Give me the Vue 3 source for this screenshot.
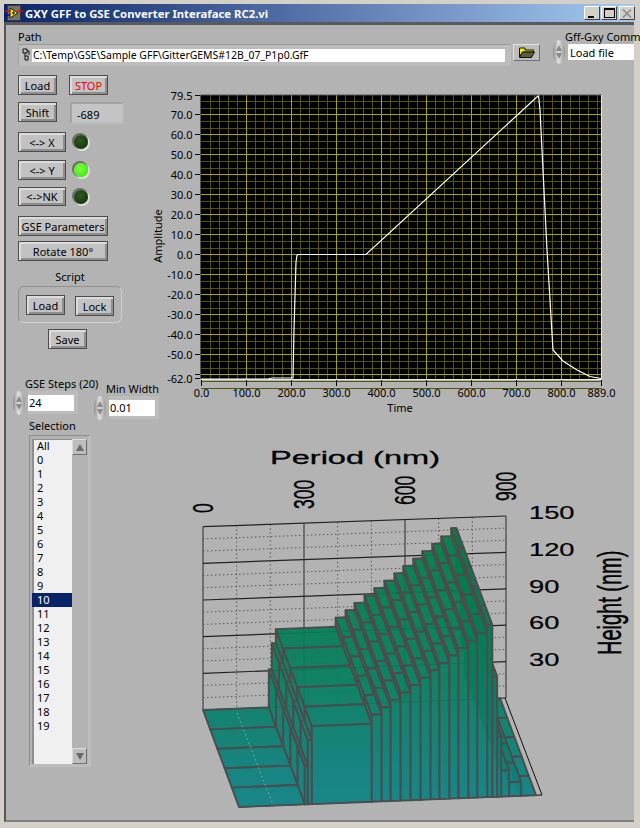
<script setup>
import { computed } from "vue"

// ---- waveform chart ----
const px = (t) => Math.round(51.2 + 0.4499 * t) + 0.5
const py = (v) => Math.round(169.2 - 2 * v) + 0.5

const yTicks = [79.5, 70, 60, 50, 40, 30, 20, 10, 0, -10, -20, -30, -40, -50, -62]
const xTicks = [0, 100, 200, 300, 400, 500, 600, 700, 800, 889]

const majorY = [70, 60, 50, 40, 30, 20, 10, 0, -10, -20, -30, -40, -50, -60]
const minorY = []
for (let n = -2; n < 42; n++) {
  if (n % 3 !== 0) minorY.push(70 - (n * 10) / 3)
}
const majorX = [100, 200, 300, 400, 500, 600, 700, 800]
const minorX = []
for (let t = 20; t < 889; t += 20) if (t % 100 !== 0) minorX.push(t)

const curve = [
  [201, 379], [268, 379], [272, 378], [293, 378], [294, 330], [296, 262], [297, 255.5], [298, 254.5], [366, 254.5], [538.5, 95.5],
  [540, 110], [547, 250], [553, 350], [563, 361], [577, 370], [590, 376.5], [601, 378.5],
]
const curvePoints = curve.map((p) => `${p[0] - 150},${p[1] - 85}`).join(" ")

// ---- 3D surface, projected by hand ----
const BL = [203, 710]
const BR = [505, 698]
const FL = [239, 807]
const project = (u, v, h) => [
  BL[0] + (BR[0] - BL[0]) * u + (FL[0] - BL[0]) * v - 190,
  BL[1] + (BR[1] - BL[1]) * u + (FL[1] - BL[1]) * v - h - 430,
]
const pts = (list) => list.map((p) => p.map((n) => n.toFixed(1)).join(",")).join(" ")

const frontX = [239, 305, 308, 312, 372, 382, 391, 401, 411, 421, 431, 440, 450, 459, 469, 478, 488, 493, 498, 502, 510, 522, 537]
const heights = [0, 38, 64, 78, 87, 94, 101, 108, 115, 122, 129, 136, 143, 150, 157, 164, 172, 120, 60, 26, 14, 0]
const us = frontX.map((x) => (x - 239) / 303)
const vs = [0, 0.2, 0.4, 0.6, 0.8, 1]

const faces = computed(() => {
  const out = []
  for (let j = 0; j < vs.length - 1; j++) {
    for (let k = heights.length - 1; k >= 0; k--) {
      const h = heights[k]
      const a = us[k]
      const b = us[k + 1]
      // riser on the left side of this step
      if (k > 0 && heights[k - 1] !== h) {
        out.push(pts([project(a, vs[j], heights[k - 1]), project(a, vs[j], h), project(a, vs[j + 1], h), project(a, vs[j + 1], heights[k - 1])]))
      }
      out.push(pts([project(a, vs[j], h), project(b, vs[j], h), project(b, vs[j + 1], h), project(a, vs[j + 1], h)]))
    }
  }
  // front skirt
  for (let k = heights.length - 1; k >= 0; k--) {
    if (heights[k] > 0) {
      out.push(pts([project(us[k], 1, heights[k]), project(us[k + 1], 1, heights[k]), project(us[k + 1], 1, 0), project(us[k], 1, 0)]))
    }
  }
  return out
})

const wallLeft = [526.7, 563.3, 600, 636.6, 673.3, 710]
const wallRight = [516, 552.4, 588.8, 625.2, 661.6, 698]
const wallX = (i) => 203 + (303 * i) / 9 - 190
const wallY = (level, i) => wallLeft[level] + ((wallRight[level] - wallLeft[level]) * i) / 9 - 430

const selection = ["All", ...Array.from({ length: 20 }, (_, i) => String(i))]
</script>

<template>
  <div class="window">
    <div class="titlebar">
      <svg class="vi-icon" width="18" height="16" viewBox="0 0 18 16">
        <rect x="2" y="0" width="14" height="16" fill="#3a3a3a" />
        <rect x="3" y="1" width="12" height="14" fill="#77756a" />
        <path d="M5 3 L13 8 L5 13 Z" fill="#f0e000" stroke="#222" />
        <path d="M0 6 H5 M13 6 H18" stroke="#f00000" stroke-width="1.4" />
        <path d="M0 10 H5" stroke="#0000e0" stroke-width="1.4" />
        <path d="M7 8 H10 M8.5 6.5 V9.5" stroke="#111" />
      </svg>
      <span class="title">GXY GFF to GSE Converter Interaface RC2.vi</span>
      <div class="win-btns">
        <span class="win-btn"><i class="min"></i></span>
        <span class="win-btn"><i class="max"></i></span>
        <span class="win-btn off">
          <svg width="10" height="9" viewBox="0 0 10 9"><path d="M1 0.5 L9 8.5 M9 0.5 L1 8.5" stroke="#8a8a8a" stroke-width="1.6" /></svg>
        </span>
      </div>
    </div>

    <div class="panel">
      <div class="top-row">
        <div class="path-box">
          <div class="label">Path</div>
          <div class="path-field">
            <span class="path-glyph">
              <svg width="8" height="13" viewBox="0 0 8 13">
                <path d="M1 1 H5 V5 H1 Z M5 3 H7 V7 M3 5 V12 H6 V8 H3" fill="none" stroke="#111" />
              </svg>
            </span>
            <span class="path-text">C:\Temp\GSE\Sample GFF\GitterGEMS#12B_07_P1p0.GfF</span>
          </div>
        </div>
        <div class="browse">
          <svg width="16" height="11" viewBox="0 0 16 11">
            <path d="M0.5 1 H6 V3 H14.5 V5 H3.5 L0.5 10 Z" fill="#f4f000" stroke="#111" />
            <path d="M0.5 10.5 L3.5 5 H15.5 L12.5 10.5 Z" fill="#5f5c3c" stroke="#111" />
          </svg>
        </div>
        <div class="combo-box">
          <div class="label combo-label">Gff-Gxy Comm</div>
          <div class="combo-row">
            <span class="spinner"><i class="up"></i><i class="down"></i></span>
            <div class="combo-field">Load file</div>
          </div>
        </div>
      </div>

      <div class="main-row">
        <div class="left-col">
          <div class="line">
            <button class="btn w39">Load</button>
            <button class="btn w39 stop">STOP</button>
          </div>
          <div class="line l-shift">
            <button class="btn w39">Shift</button>
            <div class="readout">-689</div>
          </div>
          <div class="line l-x">
            <button class="btn w48">&lt;-&gt; X</button>
            <span class="led"></span>
          </div>
          <div class="line l-y">
            <button class="btn w48">&lt;-&gt; Y</button>
            <span class="led on"></span>
          </div>
          <div class="line l-nk">
            <button class="btn w48">&lt;-&gt;NK</button>
            <span class="led"></span>
          </div>
          <button class="btn w90 b-gse">GSE Parameters</button>
          <button class="btn w90 b-rot">Rotate 180°</button>
          <div class="script-label">Script</div>
          <div class="script-box">
            <button class="btn w39">Load</button>
            <button class="btn w39 b-lock">Lock</button>
          </div>
          <button class="btn w39 b-save">Save</button>

          <div class="numerics">
            <div class="numeric">
              <div class="label n-label">GSE Steps (20)</div>
              <div class="num-row">
                <span class="spinner"><i class="up"></i><i class="down"></i></span>
                <div class="num-frame"><div class="num-field">24</div></div>
              </div>
            </div>
            <div class="numeric second">
              <div class="label n-label">Min Width</div>
              <div class="num-row">
                <span class="spinner"><i class="up"></i><i class="down"></i></span>
                <div class="num-frame"><div class="num-field">0.01</div></div>
              </div>
            </div>
          </div>

          <div class="label sel-label">Selection</div>
          <div class="listbox">
            <div class="items">
              <div v-for="s in selection" :key="s" class="item" :class="{ picked: s === '10' }">{{ s }}</div>
            </div>
            <div class="scroll">
              <span class="arrow"><i class="tri-up"></i></span>
              <span class="arrow"><i class="tri-down"></i></span>
            </div>
          </div>
        </div>

        <div class="right-col">
          <svg class="chart" width="484" height="340" viewBox="0 0 484 340">
            <rect x="51" y="10" width="401" height="284.5" fill="#000" />
            <g shape-rendering="crispEdges">
              <line v-for="v in minorY" :key="'my' + v" x1="51" x2="452" :y1="py(v)" :y2="py(v)" stroke="#555500" />
              <line v-for="t in minorX" :key="'mx' + t" :x1="px(t)" :x2="px(t)" y1="10" y2="294" stroke="#555500" />
              <line v-for="v in majorY" :key="'Y' + v" x1="51" x2="452" :y1="py(v)" :y2="py(v)" stroke="#a8a800" />
              <line v-for="t in majorX" :key="'X' + t" :x1="px(t)" :x2="px(t)" y1="10" y2="294" stroke="#a8a800" />
            </g>
            <polyline :points="curvePoints" fill="none" stroke="#fff" stroke-width="1.2" />
            <path d="M50.5 10 H452 M50.5 10 V294" stroke="#555" fill="none" />
            <path d="M451.5 10 V294.5 H51" stroke="#e8e8e8" fill="none" />

            <g v-for="v in yTicks" :key="'yt' + v">
              <line x1="45" x2="50" :y1="py(v)" :y2="py(v)" stroke="#000" shape-rendering="crispEdges" />
              <text class="tick" x="42.5" :y="py(v) + 4" text-anchor="end">{{ v.toFixed(1) }}</text>
            </g>
            <line x1="45" x2="50" :y1="py(-60)" :y2="py(-60)" stroke="#000" shape-rendering="crispEdges" />
            <g v-for="t in xTicks" :key="'xt' + t">
              <line :x1="px(t)" :x2="px(t)" y1="295" y2="301" stroke="#000" shape-rendering="crispEdges" />
              <text class="tick" :x="px(t)" y="312" text-anchor="middle">{{ t.toFixed(1) }}</text>
            </g>
            <text class="tick" x="250" y="326.5" text-anchor="middle">Time</text>
            <text class="tick" transform="translate(12 151) rotate(-90)" text-anchor="middle">Amplitude</text>
          </svg>

          <svg class="plot3d" width="444" height="385" viewBox="0 0 444 385">
            <defs>
              <linearGradient id="surf" gradientUnits="userSpaceOnUse" x1="0" y1="90" x2="0" y2="370">
                <stop offset="0" stop-color="#027c44" />
                <stop offset="0.55" stop-color="#057e5e" />
                <stop offset="1" stop-color="#0d8286" />
              </linearGradient>
            </defs>

            <text class="big" transform="translate(80 33.5) scale(1.75 1)">Period (nm)</text>
            <text v-for="(t, i) in ['0', '300', '600', '900']" :key="t" class="axis-num"
              :transform="`translate(${23 + 101 * i} ${83 - 4 * i}) rotate(-90) scale(1 1.72)`">{{ t }}</text>
            <text v-for="(t, i) in ['150', '120', '90', '60', '30']" :key="t" class="axis-num"
              :transform="`translate(339 ${89.3 + 36.6 * i}) scale(1.56 1)`">{{ t }}</text>
            <text class="big tall" transform="translate(431 225) rotate(-90) scale(1 1.65)">Height (nm)</text>

            <!-- back wall -->
            <g v-for="(n, level) in 5" :key="'dots' + n">
              <line v-for="f in [1, 2]" :key="f" :x1="wallX(0)" :x2="wallX(9)"
                :y1="wallY(level, 0) + (36.6 * f) / 3" :y2="wallY(level, 9) + (36.4 * f) / 3"
                stroke="#5a5a5a" stroke-dasharray="1.5 2.5" />
            </g>
            <line v-for="i in [1, 2, 4, 5, 7, 8]" :key="'vd' + i" :x1="wallX(i)" :x2="wallX(i)"
              :y1="wallY(0, i)" :y2="wallY(5, i)" stroke="#5a5a5a" stroke-dasharray="1.5 2.5" />
            <line v-for="i in [0, 3, 6, 9]" :key="'vs' + i" :x1="wallX(i)" :x2="wallX(i)"
              :y1="wallY(0, i)" :y2="wallY(5, i)" stroke="#595959" stroke-width="1.5" />
            <line v-for="level in 6" :key="'hs' + level" :x1="wallX(0)" :x2="wallX(9)"
              :y1="wallY(level - 1, 0)" :y2="wallY(level - 1, 9)" stroke="#222" stroke-width="1.2" />

            <!-- floor outline -->
            <path d="M315 268 L352 365 L49 377" fill="none" stroke="#111" />

            <!-- surface -->
            <polygon v-for="(f, i) in faces" :key="i" :points="f" fill="url(#surf)" fill-opacity="0.93"
              stroke="#4c4c4c" stroke-width="1.9" stroke-linejoin="round" />
            <path d="M47 283 L82 372" fill="none" stroke="#a0a8a8" stroke-dasharray="1.5 3" />
          </svg>
        </div>
      </div>
    </div>
  </div>
</template>

<style>
html,
body {
  margin: 0;
  background: #d4d0c8;
}
</style>

<style scoped>
.window {
  width: 640px;
  height: 828px;
  box-sizing: border-box;
  padding: 4px 4px 6px 4px;
  background: #d4d0c8;
  display: flex;
  flex-direction: column;
  font-family: "Noto Sans", "DejaVu Sans", sans-serif;
  font-size: 11px;
  color: #000;
  overflow: hidden;
}

.titlebar {
  height: 18px;
  flex: none;
  display: flex;
  align-items: center;
  margin-right: 1px;
  background: linear-gradient(90deg, #0a246a 0%, #a6caf0 100%);
}

.vi-icon {
  margin-left: 1px;
  flex: none;
}

.title {
  margin-left: 2px;
  color: #fff;
  font-weight: bold;
  font-size: 11.3px;
  white-space: nowrap;
}

.win-btns {
  margin-left: auto;
  margin-right: 0;
  display: flex;
}

.win-btn {
  width: 16px;
  height: 14px;
  margin-left: 1px;
  box-sizing: border-box;
  background: #d4d0c8;
  border: 1px solid;
  border-color: #fff #404040 #404040 #fff;
  display: flex;
  align-items: center;
  justify-content: center;
  position: relative;
}

.win-btn.off {
  margin-left: 2px;
}

.min {
  width: 6px;
  height: 2px;
  background: #000;
  margin-top: 7px;
  margin-right: 2px;
}

.max {
  width: 9px;
  height: 7px;
  border: 1px solid #000;
  border-top-width: 2px;
}

.panel {
  flex: 1;
  position: relative;
  background: #b3b3b3;
  border-style: solid;
  border-width: 3px 0 2px 2px;
  margin-right: 2px;
  border-color: #5a5a5a #555 #808080 #555;
  min-height: 0;
}

.label {
  height: 14px;
  line-height: 14px;
  white-space: nowrap;
}

.top-row {
  display: flex;
  padding: 5px 0 0 12px;
  height: 45px;
  box-sizing: border-box;
}

.path-box {
  width: 493px;
}

.path-field {
  height: 22px;
  box-sizing: border-box;
  display: flex;
  padding: 4px 5px 3px 13px;
  background: #bdbdbd;
  border: 1px solid;
  border-color: #989898 #bcbcbc #bcbcbc #a4a4a4;
  position: relative;
}

.path-glyph {
  position: absolute;
  left: 3px;
  top: 3px;
  line-height: 0;
}

.path-text {
  flex: 1;
  background: #fff;
  font-size: 10.45px;
  line-height: 13px;
  padding: 0 0 2px 1px;
  white-space: nowrap;
}

.browse {
  width: 27px;
  height: 17px;
  box-sizing: border-box;
  margin: 14px 0 0 2px;
  background: #bdbdbd;
  border: 1px solid;
  border-color: #e2e2e2 #707070 #707070 #e2e2e2;
  display: flex;
  align-items: center;
  justify-content: center;
}

.combo-box {
  margin-left: 13px;
  width: 81px;
}

.combo-label {
  margin-left: 12px;
}

.combo-row {
  display: flex;
  margin-top: -4px;
}

.combo-field {
  width: 66px;
  height: 16px;
  margin: 4px 0 0 3px;
  padding-left: 2px;
  box-sizing: border-box;
  line-height: 17px;
  background: #fff;
  white-space: nowrap;
}

.spinner {
  flex: none;
  width: 12px;
  height: 24px;
  border-radius: 6px / 10px;
  background: linear-gradient(90deg, #8f8f8f, #e0e0e0 45%, #9a9a9a);
  display: flex;
  flex-direction: column;
  align-items: center;
  justify-content: center;
  gap: 2px;
}

.spinner .up,
.spinner .down {
  width: 0;
  height: 0;
  border-left: 3px solid transparent;
  border-right: 3px solid transparent;
}

.spinner .up {
  border-bottom: 6px solid #8a8a8a;
}

.spinner .down {
  border-top: 6px solid #8a8a8a;
}

.main-row {
  display: flex;
  align-items: flex-start;
}

.left-col {
  flex: none;
  width: 154px;
  padding-left: 7px;
  box-sizing: border-box;
  display: flex;
  flex-direction: column;
  align-items: flex-start;
  margin-top: 5px;
}

.line {
  display: flex;
  margin-left: 5px;
  align-items: flex-start;
}

.btn {
  display: block;
  padding: 0;
  margin: 0;
  height: 20px;
  box-sizing: border-box;
  background: #c2c2c2;
  border: 1px solid #4c4c4c;
  box-shadow: inset 2px 2px 0 #dcdcdc, inset -2px -2px 0 #8e8e8e;
  font: inherit;
  color: #000;
  text-align: center;
  line-height: 17px;
  white-space: nowrap;
}

.w39 {
  width: 39px;
}

.w48 {
  width: 48px;
}

.w90 {
  width: 90px;
  margin-left: 5px;
}

.stop {
  margin-left: 12px;
  color: #f00000;
}

.l-shift {
  margin-top: 7px;
}

.readout {
  margin-left: 13px;
  width: 54px;
  height: 22px;
  box-sizing: border-box;
  padding: 2px 0 0 5px;
  line-height: 17px;
  background: #c4c4c4;
  border: 2px solid;
  border-color: #a4a4a4 #bcbcbc #bcbcbc #a4a4a4;
}

.l-x {
  margin-top: 8px;
}

.l-y {
  margin-top: 8px;
}

.l-nk {
  margin-top: 7px;
}

.l-nk .btn {
  height: 19px;
}

.led {
  width: 14px;
  height: 14px;
  margin: 3px 0 0 8px;
  border-radius: 50%;
  background: radial-gradient(circle at 45% 40%, #2f5a1c, #173a10 70%);
  box-shadow: -1px -1px 0 1px #6d6d6d, 1px 1px 0 1px #dcdcdc;
}

.led.on {
  background: radial-gradient(circle at 45% 40%, #80ff40, #44ee10 70%);
}

.b-gse {
  margin-top: 10px;
}

.b-rot {
  margin-top: 5px;
}

.script-label {
  width: 104px;
  margin: 9px 0 0 5px;
  height: 14px;
  line-height: 14px;
  text-align: center;
}

.script-box {
  margin: 2px 0 0 5px;
  width: 104px;
  height: 37px;
  box-sizing: border-box;
  border: 1px solid #8f8f8f;
  border-radius: 6px;
  border-right-color: #d0d0d0;
  border-bottom-color: #d0d0d0;
  padding: 8px 0 0 7px;
  display: flex;
  align-items: flex-start;
}

.b-lock {
  margin: 1px 0 0 10px;
}

.b-save {
  margin: 6px 0 0 35px;
}

.numerics {
  display: flex;
  margin-top: 28px;
  align-items: flex-start;
}

.numeric {
  width: 81px;
}

.numeric.second {
  margin-top: 5px;
}

.n-label {
  margin-left: 12px;
}

.num-row {
  display: flex;
}

.num-frame {
  width: 50px;
  height: 23px;
  box-sizing: border-box;
  margin-left: 3px;
  padding: 4px 4px 3px 0;
  background: #bcbcbc;
}

.num-field {
  height: 16px;
  padding-left: 1px;
  line-height: 16px;
  background: #fff;
}

.sel-label {
  margin: -1px 0 0 16px;
}

.listbox {
  margin: 2px 0 0 16px;
  width: 62px;
  height: 332px;
  box-sizing: border-box;
  padding: 3px 1px 0 2px;
  display: flex;
  background: #b3b3b3;
  border-style: solid;
  border-color: #8d8d8d #bdbdbd #bdbdbd #8d8d8d;
  border-width: 1px 3px 3px 1px;
}

.items {
  flex: 1;
  background: #f0f0f0;
  box-shadow: inset 2px 1px 0 #8e8e8e;
}

.item {
  height: 14px;
  line-height: 14px;
  padding-left: 5px;
}

.item.picked {
  background: #0a246a;
  color: #fff;
}

.scroll {
  flex: none;
  width: 15px;
  display: flex;
  flex-direction: column;
  justify-content: space-between;
}

.arrow {
  height: 16px;
  box-sizing: border-box;
  border: 1px solid;
  border-color: #dcdcdc #707070 #707070 #dcdcdc;
  background: #bdbdbd;
  display: flex;
  align-items: center;
  justify-content: center;
}

.tri-up,
.tri-down {
  width: 0;
  height: 0;
  border-left: 4px solid transparent;
  border-right: 4px solid transparent;
}

.tri-up {
  border-bottom: 7px solid #6a6a6a;
}

.tri-down {
  border-top: 7px solid #6a6a6a;
}

.right-col {
  flex: none;
  margin-left: -10px;
  display: flex;
  flex-direction: column;
  align-items: flex-start;
  width: 484px;
  margin-top: 15px;
}

.chart {
  display: block;
}

.plot3d {
  display: block;
  margin-left: 40px;
  margin-top: 5px;
  overflow: visible;
}

.tick {
  font-family: "Noto Sans", "DejaVu Sans", sans-serif;
  font-size: 11px;
  fill: #000;
}

.big {
  font-family: "Liberation Sans", sans-serif;
  font-size: 18.6px;
  fill: #000;
  stroke: #000;
  stroke-width: 0.3;
}

.big.tall {
  font-size: 20px;
}

.axis-num {
  font-family: "Liberation Sans", sans-serif;
  font-size: 17.5px;
  fill: #000;
  stroke: #000;
  stroke-width: 0.2;
}
</style>
